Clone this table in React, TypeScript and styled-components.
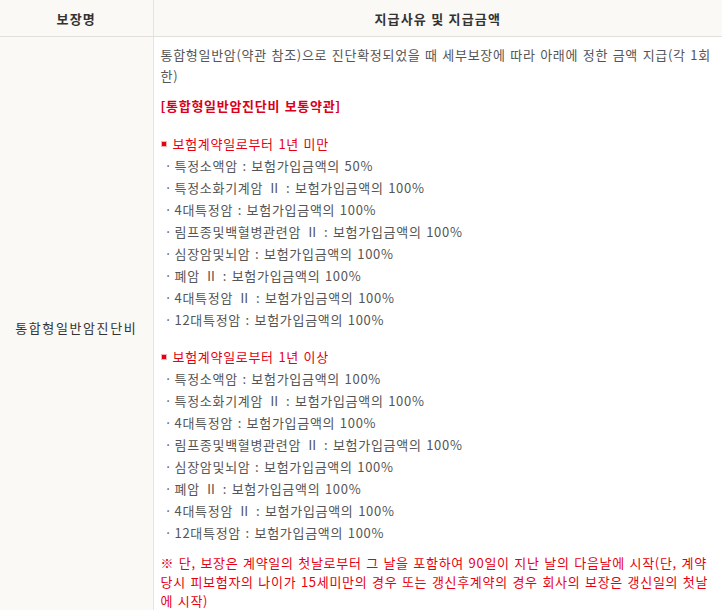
import React from 'react'
import styled, { createGlobalStyle } from 'styled-components'

const GlobalStyle = createGlobalStyle`
  body {
    margin: 0;
    background: #fff;
    font-family: "Noto Sans CJK KR", "Noto Sans", sans-serif;
  }
`

const Table = styled.table`
  width: 100%;
  border-collapse: collapse;
  table-layout: fixed;
`

const HeadCell = styled.th<{ $first?: boolean }>`
  height: 36px;
  padding: 0;
  background: #faf9f5;
  border-bottom: 1px solid #e0dfdc;
  border-right: ${(p) => (p.$first ? '1px solid #e5e4e0' : 'none')};
  font-size: 13px;
  font-weight: bold;
  letter-spacing: 1.2px;
  color: #333;
  text-align: center;
  vertical-align: middle;
`

const NameCell = styled.td`
  background: #faf9f5;
  border-right: 1px solid #e5e4e0;
  font-size: 13px;
  letter-spacing: 1.6px;
  color: #333;
  text-align: center;
  vertical-align: middle;
`

const DescCell = styled.td`
  padding: 7px 5px 7px 7px;
  vertical-align: top;
  font-size: 13px;
  letter-spacing: 0.7px;
  word-spacing: 1px;
  color: #555;
`

const Intro = styled.p`
  margin: 0 0 9px;
  line-height: 21px;
`

const Title = styled.p`
  margin: 0 0 17px;
  line-height: 21px;
  font-weight: bold;
  color: #d9001b;
`

const Section = styled.div`
  & + & {
    margin-top: 15px;
  }
`

const SectionHead = styled.div`
  display: flex;
  align-items: center;
  line-height: 22px;
  color: #e60012;
`

const Square = styled.span`
  width: 4px;
  height: 4px;
  margin: 0 7px 0 1px;
  background: #e60012;
  box-shadow: 0 0 0 1px #f7b3b8;
`

const List = styled.ul`
  margin: 0;
  padding: 0 0 0 4px;
  list-style: none;
`

const Item = styled.li`
  line-height: 22px;

  &::before {
    content: '·';
    margin-right: 2px;
  }
`

const Note = styled.p`
  margin: 9px 0 0;
  line-height: 19px;
  color: #e60012;
`

const under = [
  '특정소액암 : 보험가입금액의 50%',
  '특정소화기계암 Ⅱ : 보험가입금액의 100%',
  '4대특정암 : 보험가입금액의 100%',
  '림프종및백혈병관련암 Ⅱ : 보험가입금액의 100%',
  '심장암및뇌암 : 보험가입금액의 100%',
  '폐암 Ⅱ : 보험가입금액의 100%',
  '4대특정암 Ⅱ : 보험가입금액의 100%',
  '12대특정암 : 보험가입금액의 100%',
]

const over = [
  '특정소액암 : 보험가입금액의 100%',
  '특정소화기계암 Ⅱ : 보험가입금액의 100%',
  '4대특정암 : 보험가입금액의 100%',
  '림프종및백혈병관련암 Ⅱ : 보험가입금액의 100%',
  '심장암및뇌암 : 보험가입금액의 100%',
  '폐암 Ⅱ : 보험가입금액의 100%',
  '4대특정암 Ⅱ : 보험가입금액의 100%',
  '12대특정암 : 보험가입금액의 100%',
]

function Block({ head, items }: { head: string; items: string[] }) {
  return (
    <Section>
      <SectionHead>
        <Square />
        {head}
      </SectionHead>
      <List>
        {items.map((t, i) => (
          <Item key={i}>{t}</Item>
        ))}
      </List>
    </Section>
  )
}

function App() {
  return (
    <>
      <GlobalStyle />
      <Table>
        <colgroup>
          <col style={{ width: 153 }} />
          <col />
        </colgroup>
        <thead>
          <tr>
            <HeadCell $first>보장명</HeadCell>
            <HeadCell>지급사유 및 지급금액</HeadCell>
          </tr>
        </thead>
        <tbody>
          <tr>
            <NameCell>통합형일반암진단비</NameCell>
            <DescCell>
              <Intro>
                통합형일반암(약관 참조)으로 진단확정되었을 때 세부보장에 따라 아래에 정한 금액 지급(각 1회한)
              </Intro>
              <Title>[통합형일반암진단비 보통약관]</Title>
              <Block head="보험계약일로부터 1년 미만" items={under} />
              <Block head="보험계약일로부터 1년 이상" items={over} />
              <Note>
                ※ 단, 보장은 계약일의 첫날로부터 그 날을 포함하여 90일이 지난 날의 다음날에 시작(단, 계약 당시 피보험자의 나이가 15세미만의 경우 또는 갱신후계약의 경우 회사의 보장은 갱신일의 첫날에 시작)
              </Note>
            </DescCell>
          </tr>
        </tbody>
      </Table>
    </>
  )
}

export default App
